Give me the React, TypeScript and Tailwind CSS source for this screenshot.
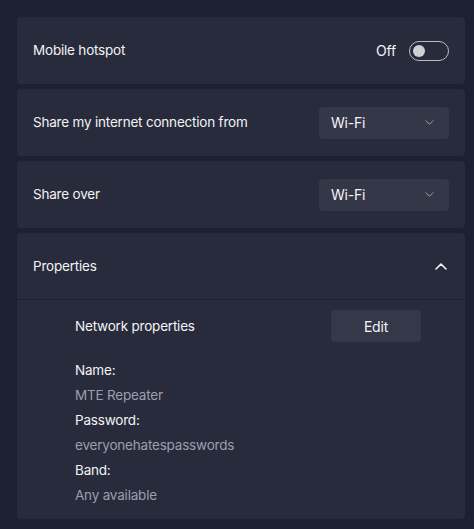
import React from 'react';

const Chevron = ({ up = false, className = '' }: { up?: boolean; className?: string }) => (
  <svg
    viewBox="0 0 12 7"
    className={className}
    fill="none"
    stroke="currentColor"
    strokeLinecap="round"
    strokeLinejoin="round"
  >
    <path d={up ? 'M1 6 L6 1 L11 6' : 'M1 1 L6 6 L11 1'} />
  </svg>
);

const Dropdown = ({ value }: { value: string }) => (
  <div className="flex h-8 w-[130px] items-center justify-between rounded-[4px] bg-[#343748] pl-3 pr-[15px]">
    <span className="text-[14px] text-[#f3f3f5]">{value}</span>
    <Chevron className="h-[5px] w-[9px] text-[#c5c7cf]" />
  </div>
);

const Row = ({ label, children }: { label: string; children: React.ReactNode }) => (
  <div className="flex h-[67px] items-center justify-between rounded-[4px] bg-[#272b3c] pl-4 pr-4">
    <span className="text-[13.5px] text-[#f3f3f5]">{label}</span>
    {children}
  </div>
);

const Field = ({ label, value }: { label: string; value: string }) => (
  <>
    <div className="flex h-[25px] items-center text-[13.5px] text-[#f3f3f5]">{label}</div>
    <div className="flex h-[25px] items-center text-[13.5px] text-[#9c9fab]">{value}</div>
  </>
);

export default function App() {
  return (
    <div className="min-h-[529px] w-[474px] bg-[#1c2030] pl-[17px] pr-[9px] pt-[17px] font-['Inter',sans-serif] tracking-[-0.2px]">
      <div className="flex flex-col gap-[5px]">
        <Row label="Mobile hotspot">
          <div className="flex items-center gap-[13px]">
            <span className="text-[14px] text-[#f3f3f5]">Off</span>
            <div className="flex h-5 w-10 items-center rounded-full border border-[#b9bbc3] px-[3px]">
              <div className="h-3 w-3 rounded-full bg-[#cfd0d6]" />
            </div>
          </div>
        </Row>
        <Row label="Share my internet connection from">
          <Dropdown value="Wi-Fi" />
        </Row>
        <Row label="Share over">
          <Dropdown value="Wi-Fi" />
        </Row>
        <div className="flex flex-col rounded-[4px] bg-[#272b3c]">
          <div className="flex h-[67px] items-center justify-between border-b border-[#1d2130] pl-4 pr-[18px]">
            <span className="text-[13.5px] text-[#f3f3f5]">Properties</span>
            <Chevron up className="h-[7px] w-[12px] stroke-[1.6] text-[#f3f3f5]" />
          </div>
          <div className="flex flex-col pb-[11px] pl-[58px] pr-[44px] pt-[10px]">
            <div className="flex items-center justify-between">
              <span className="text-[13.5px] text-[#f3f3f5]">Network properties</span>
              <div className="flex h-8 w-[90px] items-center justify-center rounded-[4px] bg-[#353849] text-[14px] text-[#f3f3f5]">
                Edit
              </div>
            </div>
            <div className="mt-[16px] flex flex-col">
              <Field label="Name:" value="MTE Repeater" />
              <Field label="Password:" value="everyonehatespasswords" />
              <Field label="Band:" value="Any available" />
            </div>
          </div>
        </div>
      </div>
    </div>
  );
}
